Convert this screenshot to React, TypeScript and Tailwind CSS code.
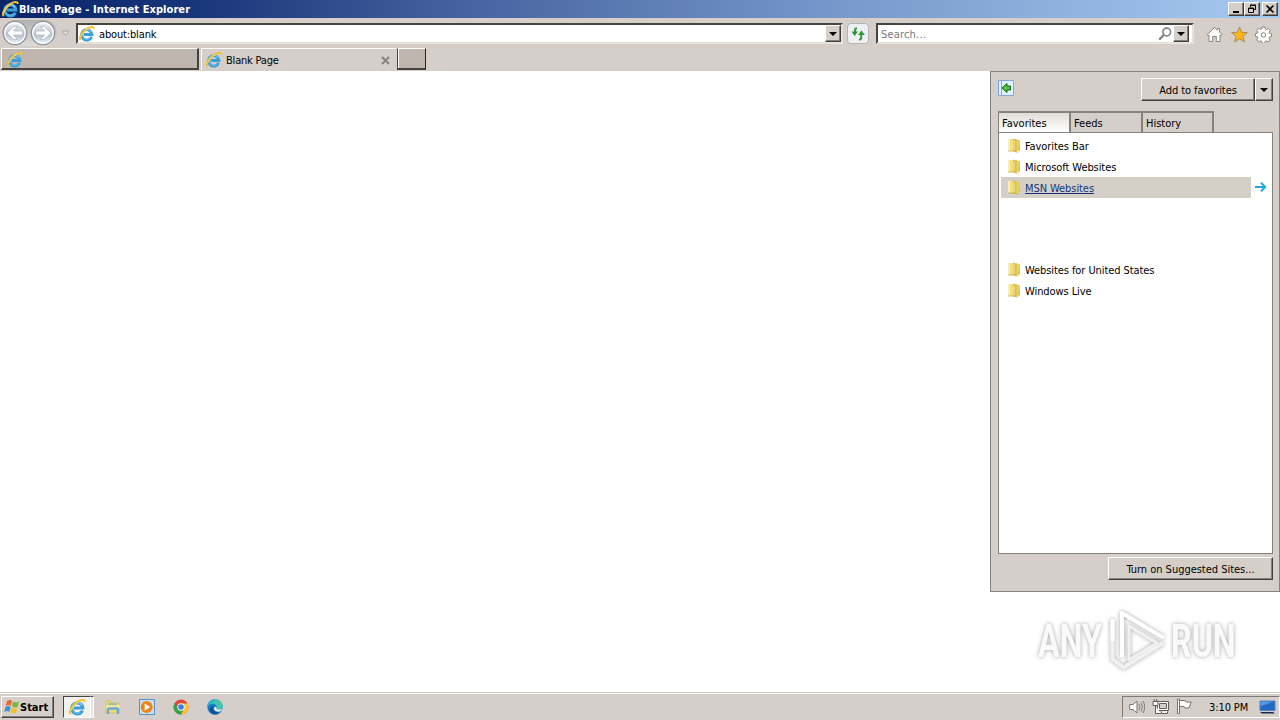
import React from 'react';

interface IconProps {
  className?: string;
}

const IeIcon: React.FC<IconProps> = ({ className }) => (
  <svg viewBox="0 0 16 16" className={className} fill="none">
    <path d="M12.6 10.9A5.2 5.2 0 1 1 13 8.5H4.6" stroke="#3b9ddb" strokeWidth="2.9" />
    <path d="M12.4 6A5 5 0 0 0 3.6 6" stroke="#8ed4f5" strokeWidth="1" />
    <path d="M3.6 11.4A5 5 0 0 0 11 12.2" stroke="#74c2ec" strokeWidth="0.9" />
    <path d="M1.6 14.2C-.6 12 3 6 7.4 3 11 .6 14.6 0 15 2.8" stroke="#f2c12e" strokeWidth="1.9" />
    <path d="M2.2 11C3.4 8 6 4.8 9.2 2.8" stroke="#fff0a0" strokeWidth="0.6" />
  </svg>
);

const FolderIcon: React.FC = () => (
  <svg viewBox="0 0 14 16" className="h-4 w-3.5 shrink-0 -translate-y-px">
    <path d="M9 2l4 1.5v9.5l-1 1H8z" fill="#e6cf63" />
    <path d="M1 2h5.5v12H1z" fill="#f1df86" />
    <path d="M1 2h2v12H1z" fill="#f9efb4" />
    <path d="M6 1.5l3.5 1V15L6 14z" fill="#dcc148" />
    <path d="M7 3.5v9.5" stroke="#f8eda0" />
    <path d="M12.5 8.5v4.5" stroke="#a9bccb" />
    <path d="M1 14h5l3.5 1h2" stroke="#c2a83d" strokeWidth="0.7" fill="none" />
  </svg>
);

const DownArrow: React.FC = () => (
  <svg viewBox="0 0 8 4" className="h-1 w-2">
    <path d="M0 0h8L4 4z" fill="#000" />
  </svg>
);

const raised = 'border border-t-white border-l-white border-r-[#404040] border-b-[#404040] bg-[#d6cfc9] shadow-[inset_-1px_-1px_0_#848079]';

const NavCircle: React.FC<{ flip?: boolean }> = ({ flip }) => (
  <svg viewBox="0 0 26 26" className={flip ? 'h-[26px] w-[26px] -scale-x-100' : 'h-[26px] w-[26px]'}>
    <defs>
      <linearGradient id="nav" x1="0" y1="0" x2="0" y2="1">
        <stop offset="0" stopColor="#f4f4f5" />
        <stop offset="0.45" stopColor="#c9cfd6" />
        <stop offset="0.55" stopColor="#b4becb" />
        <stop offset="1" stopColor="#edf7fc" />
      </linearGradient>
    </defs>
    <circle cx="13" cy="13" r="11.7" fill="url(#nav)" stroke="#8c96a2" strokeWidth="1.3" />
    <circle cx="13" cy="13" r="10.2" fill="none" stroke="#fff" strokeWidth="1.2" />
    <path d="M5 13l7-6.5h3.5L11.5 11H20.5v4h-9l4 4.5H12z" fill="#fff" stroke="#aab5c1" strokeWidth="0.7" />
  </svg>
);

const TitleBar: React.FC = () => (
  <div className="flex h-[18px] items-center bg-[linear-gradient(90deg,#0a246a_0%,#173579_15%,#45639f_36%,#7799cc_66%,#a6caf0_100%)] pl-0.5 pr-0.5">
    <IeIcon className="h-[17px] w-[17px]" />
    <span className="whitespace-nowrap text-[11px] font-bold leading-none tracking-[0.07px] text-white">Blank Page - Internet Explorer</span>
    <div className="ml-auto flex">
      <button className={`flex h-3.5 w-4 items-center justify-center ${raised}`}>
        <svg viewBox="0 0 10 10" className="h-2.5 w-2.5"><path d="M2 8h6" stroke="#000" strokeWidth="2" /></svg>
      </button>
      <button className={`flex h-3.5 w-4 items-center justify-center ${raised}`}>
        <svg viewBox="0 0 10 10" className="h-2.5 w-2.5 shrink-0" fill="none" stroke="#000">
          <path d="M3.5 3V1.5h5v4H7M3 1h6M1.5 4v4.5h5V4zM1 4.5h6" />
        </svg>
      </button>
      <button className={`ml-0.5 flex h-3.5 w-4 items-center justify-center ${raised}`}>
        <svg viewBox="0 0 10 10" className="h-2.5 w-2.5"><path d="M1.5 1.5l7 7m0-7l-7 7" stroke="#000" strokeWidth="1.6" /></svg>
      </button>
    </div>
  </div>
);

const NavBar: React.FC = () => (
  <div className="flex h-[30px] items-start pt-[5px]">
    <div className="-mt-[3px] ml-0.5 flex h-[26px] w-[55px] items-center gap-0.5 rounded-2xl bg-[linear-gradient(#b5b1b0,#dedbd9)]">
      <NavCircle />
      <NavCircle flip />
    </div>
    <svg viewBox="0 0 9 7" className="ml-1 mt-[7px] h-[7px] w-[9px]">
      <path d="M.8 1h7.4L4.5 5.5z" fill="#e0dcd8" stroke="#aaa5a1" />
    </svg>
    <div className="ml-1.5 flex h-[21px] w-[767px] items-center border-2 border-b-[#e7e2dc] border-l-[#48443f] border-r-[#e7e2dc] border-t-[#48443f] bg-white pl-px">
      <IeIcon className="h-4 w-4" />
      <span className="ml-1 pt-px tracking-[-0.15px]">about:blank</span>
      <button className={`ml-auto flex h-[17px] w-4 items-center justify-center ${raised}`}><DownArrow /></button>
    </div>
    <button className="ml-1 flex h-[21px] w-[22px] items-center justify-center rounded-sm border border-[#b6b5b5] bg-[#eef0f4]">
      <svg viewBox="0 0 16 14" className="h-3.5 w-4" fill="none" stroke="#2d9632" strokeWidth="1.9">
        <path d="M7 1.5H6Q5 1.5 5 3V5M9 12.5h1q1.200 0 1.200-2V7" />
        <path d="M1.500 4.500h6.500L4.700 9zM8 8h6.800L11.500 3.500z" fill="#2d9632" stroke="none" />
      </svg>
    </button>
    <div className="ml-[7px] flex h-[21px] w-[318px] items-center border-2 border-b-[#e7e2dc] border-l-[#48443f] border-r-[#e7e2dc] border-t-[#48443f] bg-white pl-[3px]">
      <span className="pt-px tracking-[0.18px] text-[#777]">Search...</span>
      <svg viewBox="0 0 14 14" className="ml-auto h-3.5 w-3.5" fill="none" stroke="#83807e">
        <circle cx="8.7" cy="5" r="3.9" strokeWidth="1.6" />
        <path d="M6 7.8L1.2 12.6" strokeWidth="2.2" />
      </svg>
      <button className={`ml-px mr-[3px] flex h-[17px] w-4 items-center justify-center ${raised}`}><DownArrow /></button>
    </div>
    <div className="ml-3 mt-[3px] flex items-center gap-2">
      <svg viewBox="0 0 17 17" className="h-[17px] w-[17px]">
        <path d="M1 8.8L8.5 1.5l2.8 2.7V2.500h2.200v3.800L16 8.800l-1 1-1-.8v6.500h-3.700v-5H6.700v5H3V9l-1 .8z" fill="#fff" stroke="#8a8682" />
      </svg>
      <svg viewBox="0 0 17 17" className="h-[17px] w-[17px]">
        <path d="M8.5 1l2.1 5.3 5.7.3-4.4 3.7 1.5 5.6-4.9-3.1-4.9 3.1 1.5-5.6L.7 6.6l5.7-.3z" fill="#fbb714" stroke="#a98d55" />
      </svg>
      <svg viewBox="0 0 17 17" className="-ml-px h-[17px] w-[17px]" fill="#fff" stroke="#8a8682">
        <path d="M7 1h3l.3 2 1.4.6 1.6-1.2 2 2-1.2 1.7.6 1.3 1.8.3v2.9l-2 .4-.5 1.3 1.2 1.7-2 2-1.7-1.2-1.3.5-.3 1.9H7l-.4-2-1.3-.5-1.6 1.2-2-2L2.900 12l-.6-1.300-1.800-.3V7.500l2-.3L3 5.900 1.800 4.300l2-2 1.700 1.200 1.200-.5z" />
        <circle cx="8.5" cy="8.9" r="2.2" />
      </svg>
    </div>
  </div>
);

const TabStrip: React.FC = () => (
  <div className="flex h-[22px] pl-px">
    <div className="flex h-[22px] w-[198px] items-center border-b-2 border-l border-r-2 border-t border-b-[#454240] border-l-white border-r-[#454240] border-t-white bg-[#bdb5ae] pl-[5px] pt-0.5">
      <IeIcon className="h-4 w-4" />
    </div>
    <div className="ml-0.5 flex h-[22px] w-[195px] items-center border-l border-t border-white pl-1 pt-px">
      <IeIcon className="h-4 w-4" />
      <span className="ml-1 pt-px tracking-[-0.2px]">Blank Page</span>
      <svg viewBox="0 0 9 9" className="ml-auto mr-1.5 h-[9px] w-[9px]"><path d="M1 1l7 7m0-7L1 8" stroke="#85817f" strokeWidth="1.9" /></svg>
    </div>
    <div className="ml-px h-[22px] w-[29px] border-b-2 border-l border-r border-t border-b-[#454240] border-l-[#454240] border-r-[#252422] border-t-white bg-[#bdb5ae] shadow-[inset_1px_0_0_#fff]" />
  </div>
);

const FavoriteRow: React.FC<{ label: string; active?: boolean }> = ({ label, active }) => (
  <div className="flex h-[21px] items-center">
    <div className={`flex h-[21px] w-[250px] items-center pl-1.5 ${active ? 'bg-[#d4d0c8]' : ''}`}>
      <FolderIcon />
      <span className={`ml-1 pt-0.5 tracking-[-0.08px] ${active ? 'text-[#16347d] underline' : ''}`}>{label}</span>
    </div>
    {active && (
      <svg viewBox="0 0 12 10" className="ml-1 h-2.5 w-3 -translate-y-px" fill="none" stroke="#1eaadf" strokeWidth="2">
        <path d="M0 5h10M6 .8L10.2 5 6 9.2" />
      </svg>
    )}
  </div>
);

const FavoritesPanel: React.FC = () => (
  <aside className="mt-px flex h-[521px] w-[290px] flex-col border border-[#86837e] bg-[#d6cfc9] pl-[7px] pr-1.5 pt-1.5">
    <div className="flex h-[33px] items-start justify-between">
      <svg viewBox="0 0 16 16" className="mt-0.5 h-4 w-4">
        <path d="M.5.5h15v15H.5z" fill="#e4f1ff" stroke="#7da8df" />
        <path d="M3.5 1v14" stroke="#7da8df" />
        <path d="M4 8l5-4.500V6h3.500v4H9v2.500z" fill="#4fc23e" stroke="#17631b" />
      </svg>
      <div className="flex">
        <button className={`h-[23px] w-[114px] ${raised}`}><span className="relative top-px tracking-[-0.08px]">Add to favorites</span></button>
        <button className={`flex h-[23px] w-[18px] items-center justify-center ${raised}`}><DownArrow /></button>
      </div>
    </div>
    <div className="flex h-[21px]">
      {['Favorites', 'Feeds', 'History'].map((tab, i) => (
        <div key={tab} className={`flex h-[21px] items-center border-r-2 border-t-2 border-[#85827e] pt-0.5 ${i === 0 ? 'w-[73px] border-l bg-gradient-to-b from-[#e1ded9] to-white pl-[3px]' : i === 1 ? 'w-[72px] pl-[3px]' : 'w-[71px] pl-[3px]'}`}>{tab}</div>
      ))}
    </div>
    <div className="h-[422px] border border-[#86837e] bg-white pl-0.5 pt-0.5">
      <FavoriteRow label="Favorites Bar" />
      <FavoriteRow label="Microsoft Websites" />
      <FavoriteRow label="MSN Websites" active />
      <div className="h-[61px]" />
      <FavoriteRow label="Websites for United States" />
      <FavoriteRow label="Windows Live" />
    </div>
    <button className={`ml-auto mt-[3px] h-[23px] w-[165px] shrink-0 ${raised}`}><span className="relative top-px tracking-[-0.02px]">Turn on Suggested Sites...</span></button>
  </aside>
);

const Watermark: React.FC = () => (
  <div className="mr-[46px] mt-[16px] flex h-[66px] items-center font-['Roboto',sans-serif] text-[46px] font-bold leading-none drop-shadow-[0_0_2px_rgba(0,0,0,0.36)]">
    <span className="inline-block w-[67px] origin-left -translate-x-0.5 scale-x-[0.7] text-[#fafafa]">ANY</span>
    <svg viewBox="0 0 60 66" className="h-[66px] w-[60px]" fill="none" strokeWidth="4" strokeLinejoin="round">
      <path d="M5.500 11v40l11 8.500L56 35" stroke="#f1f1f1" />
      <path d="M22 52l28-17-28-17z" stroke="#f1f1f1" strokeWidth="3" />
      <path d="M5.500 33V11M15 49V5l42 25" stroke="#fff" />
    </svg>
    <span className="ml-1 inline-block w-[63px] origin-left scale-x-[0.7] text-[#fafafa]">RUN</span>
  </div>
);

const Taskbar: React.FC = () => (
  <footer className="flex h-7 items-center border-t border-[#d6cfc9] bg-[#d6cfc9] pl-px shadow-[inset_0_1px_0_#fff]">
    <button className={`mt-px flex h-[22px] w-[53px] items-center pl-0.5 ${raised}`}>
      <svg viewBox="0 0 16 16" className="h-4 w-4">
        <path d="M3 2q3-2 5 0L6.7 7q-2-1.8-5 0z" fill="#e8682d" />
        <path d="M9 2.5q3 1.7 6 0L13.5 8q-3 1.2-5.5-.7z" fill="#79b73b" />
        <path d="M1.5 8q3-1.8 5 0L5.2 13q-2-1.8-5 0z" fill="#3a91d4" />
        <path d="M7.7 8.5q3 1.5 5.5.5L11.8 14q-3 1.2-5.4-.7z" fill="#f5be2b" />
      </svg>
      <span className="font-bold">Start</span>
    </button>
    <div className="ml-[9px] mt-px flex h-[22px] w-7 items-center justify-center border border-b-white border-l-[#444] border-r-white border-t-[#444] bg-[#f3f1ee]">
      <IeIcon className="h-[17px] w-[17px]" />
    </div>
    <div className="mt-px h-[22px] w-[3px] border-r border-t border-r-white border-t-[#444] bg-[#eae7e3]" />
    <div className="ml-[11px] flex items-center gap-[18px]">
      <svg viewBox="0 0 16 16" className="h-4 w-4">
        <path d="M1 2h5l1 2h7v10H1z" fill="#ecd779" stroke="#d4b84e" strokeWidth="0.7" />
        <path d="M3 4h9v3H3z" fill="#9bc4a0" />
        <path d="M1 6h14v3H1z" fill="#f5e59e" />
        <path d="M3 15v-4q0-1.5 1.5-1.5h7q1.500 0 1.500 1.500v4" fill="none" stroke="#63add6" strokeWidth="2.4" />
      </svg>
      <svg viewBox="0 0 16 16" className="h-4 w-4">
        <path d="M.5.5h15v15H.5z" fill="#c6e1f5" stroke="#5794c5" />
        <circle cx="7.7" cy="8" r="6" fill="#ee8419" />
        <path d="M5.7 4.5l5.6 3.5-5.600 3.500z" fill="#fff" />
      </svg>
      <svg viewBox="0 0 16 16" className="h-4 w-4">
        <circle cx="8" cy="8" r="7.5" fill="#e34536" />
        <path d="M1.5 4.3A7.500 7.500 0 0 0 8 15.500L11.100 9.800 8 11.500 4.900 9.800z" fill="#33a352" />
        <path d="M8 15.5A7.500 7.500 0 0 0 14.500 4.400H8l3.100 5.400z" fill="#fbc72e" />
        <circle cx="8" cy="8" r="3.7" fill="#fff" />
        <circle cx="8" cy="8" r="2.8" fill="#3d7de4" />
      </svg>
      <svg viewBox="0 0 16 16" className="h-4 w-4">
        <circle cx="8" cy="8" r="7.7" fill="#1778ca" />
        <path d="M.4 7.2C1 2.8 4.2.3 8 .3c4.300 0 7.700 3 7.700 6.500 0 2.300-1.500 3.800-3.700 3.800-2 0-2.700-.7-2.400-1.300C10.700 6 6.200 2.400.4 7.200z" fill="#43c6a8" />
        <path d="M.4 7.2C1 2.8 4.2.3 8 .3c-1 2.300-3 4-7.600 6.900z" fill="#2db2d5" />
        <path d="M6.2 7.4c-1.500 3.200 1.300 6.900 6.500 5.800C8.900 17 3.600 15.400 2.900 11c-.3-2 1-3.500 3.300-3.600z" fill="#0c4f97" />
        <path d="M9.6 9.3c-.3.6.4 1.300 2.400 1.300 1.500 0 2.600-.5 3.200-1.500l-.9 2.700c-3.700 1.800-7.300.5-7.300-2.200 0-1 .8-1.800 1.600-1.800.7 0 1.200.8 1 1.500z" fill="#e8f3f7" />
      </svg>
    </div>
    <div className="ml-auto mt-px flex h-[22px] w-[158px] items-center border border-b-white border-l-[#7d7974] border-r-white border-t-[#7d7974] pl-1.5">
      <svg viewBox="0 0 16 16" className="h-4 w-4" fill="none" stroke="#77736f">
        <path d="M.7 5.5H4L8 2v12l-4-3.500H.7z" fill="#fff" />
        <path d="M10 5q2 3 0 6M12 3.5q3 4.500 0 9M14 2q3.500 6 0 12" strokeWidth="0.9" />
      </svg>
      <svg viewBox="0 0 17 16" className="ml-[7px] h-4 w-[17px]" fill="#fff" stroke="#625e5b">
        <path d="M5.5 2.500h11v9h-11z" />
        <path d="M7.5 4.500h7v5h-7z" fill="#d5d1cd" />
        <path d="M9.500 12.500v2h6v-2M1 2.500h5v4H1zM2.200 2V0M4.700 2V0M3.500 7v7.500H9" />
      </svg>
      <svg viewBox="0 0 16 16" className="ml-[7px] h-4 w-4 -translate-y-px" fill="#fff" stroke="#77736f">
        <path d="M1.5 15.5V1h2v14.500zM3.500 2.500H9L10 4h5.200L13 10H9L8 8.500H3.500z" />
      </svg>
      <span className="ml-[17px] w-[42px] whitespace-nowrap tracking-[-0.1px]">3:10 PM</span>
      <svg viewBox="0 0 17 15" className="ml-2 h-[15px] w-[17px] shrink-0">
        <path d="M1 1h15v9.500H1z" fill="#2768c3" stroke="#4d82c5" />
        <path d="M1.500 1.500H13Q8 5 1.500 6z" fill="#5599e0" />
        <path d="M1 12h13l2 1.500H3z" fill="#142b55" />
      </svg>
    </div>
  </footer>
);

const App: React.FC = () => {
  return (
    <div className="flex h-[720px] w-[1280px] flex-col overflow-hidden whitespace-nowrap bg-[#d6cfc9] font-['DejaVu_Sans_Condensed','DejaVu_Sans',sans-serif] text-[11px] leading-[13px] text-black">
      <TitleBar />
      <NavBar />
      <TabStrip />
      <main className="flex h-[622px] items-start justify-end bg-[linear-gradient(#d6cfc9_1px,#fff_1px)]">
        <div className="flex flex-col items-end">
          <FavoritesPanel />
          <Watermark />
        </div>
      </main>
      <Taskbar />
    </div>
  );
};

export default App;
